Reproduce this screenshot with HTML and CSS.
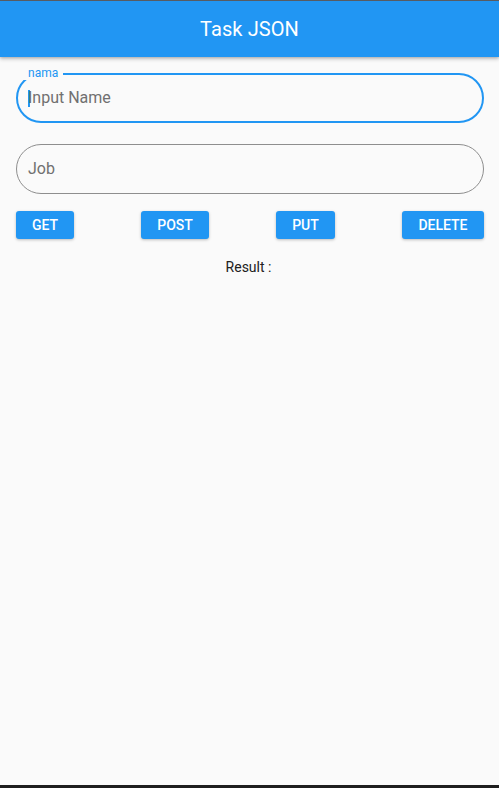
FILE: index.html
```html
<!DOCTYPE html>
<html>
<head>
<meta charset="utf-8">
<link rel="stylesheet" href="styles.css">
</head>
<body>
<div class="topline"></div>
<header class="appbar"><h1 class="title">Task JSON</h1></header>
<main class="content">
  <div class="field field-focused">
    <span class="field-label">nama</span>
    <span class="cursor"></span><span class="placeholder">Input Name</span>
  </div>
  <div class="field field-idle">
    <span class="placeholder">Job</span>
  </div>
  <div class="buttons">
    <button class="btn btn-get">GET</button>
    <button class="btn btn-post">POST</button>
    <button class="btn btn-put">PUT</button>
    <button class="btn btn-delete">DELETE</button>
  </div>
  <p class="result">Result :</p>
</main>
<div class="bottombar"></div>
</body>
</html>
```
FILE: styles.css
```css
html, body {
  margin: 0;
  padding: 0;
  height: 100%;
}
body {
  background: #fafafa;
  font-family: Roboto, "Noto Sans", sans-serif;
  display: flex;
  flex-direction: column;
  height: 788px;
  overflow: hidden;
}
.topline {
  height: 1px;
  background: #5b5f66;
  flex: none;
}
.appbar {
  height: 56px;
  flex: none;
  background: #2196f3;
  display: flex;
  align-items: center;
  justify-content: center;
  box-shadow: 0 2px 4px rgba(0,0,0,0.22), 0 1px 2px rgba(0,0,0,0.12);
  position: relative;
  z-index: 1;
}
.title {
  margin: 0;
  color: #fff;
  font-size: 20px;
  font-weight: 400;
  letter-spacing: 0.1px;
}
.content {
  flex: 1;
  display: flex;
  flex-direction: column;
  padding: 16px 15px 0 16px;
}
.field {
  position: relative;
  box-sizing: border-box;
  height: 50px;
  border-radius: 25px;
  display: flex;
  align-items: center;
  padding-left: 11px;
}
.field-focused {
  border: 2px solid #2196f3;
  padding-left: 10px;
}
.field-idle {
  border: 1px solid #8e8e8e;
  margin-top: 21px;
}
.field-label {
  position: absolute;
  left: 5px;
  top: -9px;
  padding: 0 5px;
  background: #fafafa;
  color: #2196f3;
  font-size: 12px;
  line-height: 14px;
}
.placeholder {
  color: #707070;
  font-size: 16px;
  line-height: 20px;
}
.cursor {
  width: 2px;
  height: 17px;
  background: #2196f3;
  margin-right: -2px;
}
.buttons {
  display: flex;
  justify-content: space-between;
  margin-top: 17px;
}
.btn {
  height: 28px;
  border: none;
  border-radius: 3px;
  background: #2196f3;
  color: #fff;
  font-family: Roboto, "Noto Sans", sans-serif;
  font-size: 14px;
  font-weight: 500;
  padding: 0;
  box-shadow: 0 1px 3px rgba(0,0,0,0.25);
}
.btn-get { width: 58px; }
.btn-post { width: 68px; }
.btn-put { width: 59px; }
.btn-delete { width: 82px; }
.result {
  margin: 20px 0 0;
  text-align: center;
  font-size: 14px;
  line-height: 17px;
  color: #212121;
  padding-right: 3px;
}
.bottombar {
  height: 3px;
  flex: none;
  background: #1e1e1e;
}
```
